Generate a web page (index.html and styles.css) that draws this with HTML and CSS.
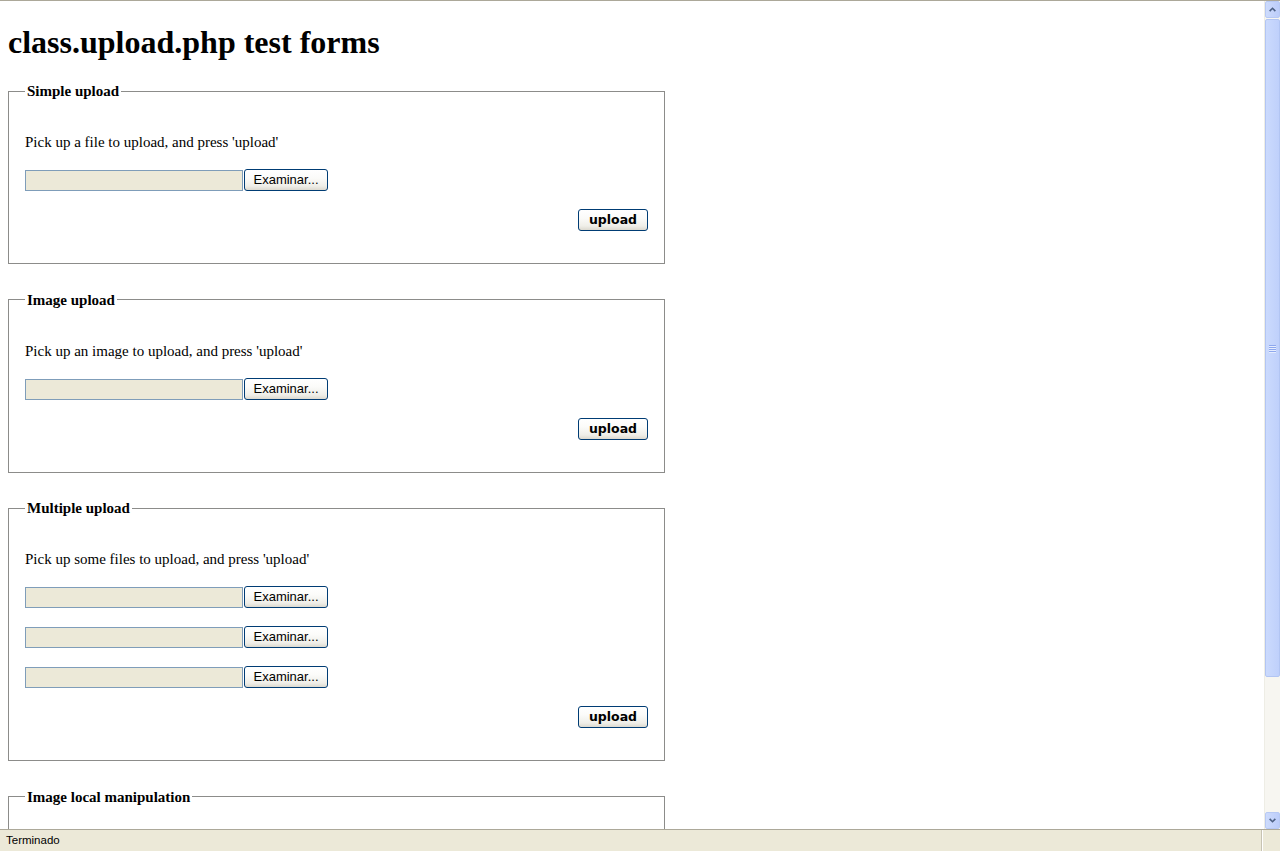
FILE: index.html
```html
<!DOCTYPE html>
<html>
<head>
<meta charset="utf-8">
<title>class.upload.php test forms</title>
<link rel="stylesheet" href="styles.css">
</head>
<body>
<div class="window">
  <div class="topline"></div>
  <div class="main">
    <div class="content">
      <h1>class.upload.php test forms</h1>

      <fieldset class="box">
        <legend>Simple upload</legend>
        <p>Pick up a file to upload, and press 'upload'</p>
        <div class="file"><span class="file-text"></span><button class="btn browse">Examinar...</button></div>
        <div class="actions"><button class="btn upload">upload</button></div>
      </fieldset>

      <fieldset class="box">
        <legend>Image upload</legend>
        <p>Pick up an image to upload, and press 'upload'</p>
        <div class="file"><span class="file-text"></span><button class="btn browse">Examinar...</button></div>
        <div class="actions"><button class="btn upload">upload</button></div>
      </fieldset>

      <fieldset class="box">
        <legend>Multiple upload</legend>
        <p>Pick up some files to upload, and press 'upload'</p>
        <div class="file"><span class="file-text"></span><button class="btn browse">Examinar...</button></div>
        <div class="file"><span class="file-text"></span><button class="btn browse">Examinar...</button></div>
        <div class="file"><span class="file-text"></span><button class="btn browse">Examinar...</button></div>
        <div class="actions"><button class="btn upload">upload</button></div>
      </fieldset>

      <fieldset class="box box-last">
        <legend>Image local manipulation</legend>
      </fieldset>
    </div>
    <div class="scrollbar">
      <div class="sb-btn">
        <svg width="16" height="17" viewBox="0 0 16 17"><polyline points="4.5,10.5 8,7 11.5,10.5" fill="none" stroke="#4d6185" stroke-width="2"/></svg>
      </div>
      <div class="sb-track">
        <div class="sb-thumb"><span class="grip"></span><span class="grip"></span><span class="grip"></span><span class="grip"></span></div>
      </div>
      <div class="sb-btn">
        <svg width="16" height="17" viewBox="0 0 16 17"><polyline points="4.5,6.5 8,10 11.5,6.5" fill="none" stroke="#4d6185" stroke-width="2"/></svg>
      </div>
    </div>
  </div>
  <div class="status">
    <span class="status-text">Terminado</span>
    <span class="status-panel"></span>
  </div>
</div>
</body>
</html>
```

FILE: styles.css
```css
html, body {
  margin: 0;
  padding: 0;
  background: #ffffff;
}

.window {
  width: 1280px;
  height: 851px;
  display: flex;
  flex-direction: column;
  overflow: hidden;
}

.topline {
  height: 1px;
  background: #aca899;
  flex: none;
}

.main {
  height: 828px;
  display: flex;
  flex: none;
}

.content {
  width: 1264px;
  height: 828px;
  overflow: hidden;
  padding: 0 8px;
  box-sizing: border-box;
  font-family: "Liberation Serif", "Times New Roman", serif;
  color: #000;
}

h1 {
  font-size: 32px;
  line-height: 36px;
  font-weight: bold;
  margin: 23px 0 22px;
}

.box {
  width: 657px;
  box-sizing: border-box;
  margin: 0 0 26.5px;
  padding: 33px 16px 32px;
  border: 1px solid #8c8c8a;
  min-width: 0;
}

.box-last {
  height: 200px;
}

.box legend {
  font-size: 15px;
  line-height: 18px;
  font-weight: bold;
  padding: 0 2px;
}

.box p {
  margin: 0 0 18px;
  font-size: 15px;
  line-height: 18px;
}

.file {
  display: flex;
  height: 22px;
  margin-bottom: 18px;
}

.file-text {
  width: 218px;
  height: 21px;
  margin-top: 1px;
  box-sizing: border-box;
  border: 1px solid #7f9db9;
  background: #ece9d8;
}

.btn {
  height: 22px;
  box-sizing: border-box;
  border: 1px solid #003c74;
  border-radius: 3px;
  background: linear-gradient(to bottom, #ffffff 0%, #fbfbf9 40%, #efeee8 80%, #dcd9cf 100%);
  color: #000;
  padding: 0;
  font-family: "Liberation Sans", Arial, sans-serif;
  line-height: 20px;
}

.browse {
  width: 84px;
  margin-left: 1px;
  font-size: 13px;
}

.actions {
  display: flex;
  justify-content: flex-end;
}

.upload {
  width: 70px;
  font-family: "DejaVu Sans", Verdana, sans-serif;
  font-weight: bold;
  font-size: 12.5px;
}

/* scrollbar */
.scrollbar {
  width: 16px;
  height: 828px;
  display: flex;
  flex-direction: column;
  background: #f7f6f1;
  border-left: 1px solid #eeede5;
  box-sizing: border-box;
}

.sb-btn {
  height: 17px;
  flex: none;
  box-sizing: border-box;
  border: 1px solid #b7c9f4;
  border-radius: 2px;
  background: linear-gradient(to right, #cddbfc, #bccdfa);
  display: flex;
  align-items: center;
  justify-content: center;
}

.sb-btn svg {
  display: block;
}

.sb-track {
  flex: 1;
  display: flex;
  flex-direction: column;
  padding-top: 1px;
}

.sb-thumb {
  height: 658px;
  box-sizing: border-box;
  border: 1px solid #b2c5f3;
  border-radius: 2px;
  background: linear-gradient(to right, #cbdafd, #bfd0fb);
  display: flex;
  flex-direction: column;
  align-items: center;
  justify-content: center;
  gap: 1px;
}

.grip {
  width: 7px;
  height: 1px;
  background: #8ea8ee;
  box-shadow: 0 1px 0 #e6edfe;
}

/* status bar */
.status {
  height: 22px;
  flex: none;
  box-sizing: border-box;
  border-top: 1px solid #aca899;
  background: #ece9d8;
  display: flex;
  align-items: center;
  justify-content: space-between;
  font-family: "Liberation Sans", Tahoma, sans-serif;
  font-size: 11.5px;
  color: #000;
}

.status-text {
  padding-left: 6px;
  padding-bottom: 1px;
}

.status-panel {
  width: 18px;
  height: 21px;
  border-left: 1px solid #c7c3b3;
  box-shadow: inset 1px 0 0 #ffffff;
}
```
